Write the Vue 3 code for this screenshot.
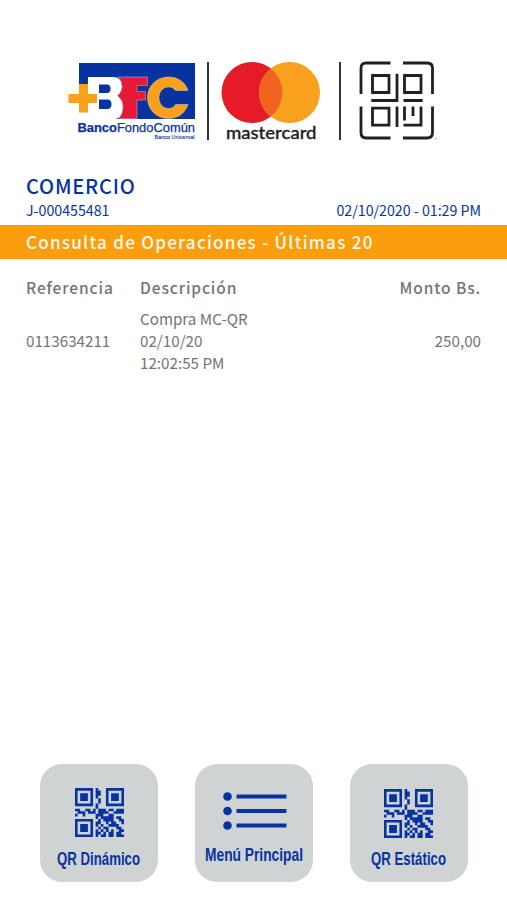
<template>
  <main class="screen">
    <!-- LOGOS -->
    <header class="logos">
      <svg class="logo-bfc" viewBox="0 0 128 80" width="128" height="80">
        <path d="M11 2h116v56H20V23h-9z" fill="#0733a1" />
        <path
          d="M20 16h25q9 0 9 9.500 0 6-4.500 9.500 5.500 4 5.500 11Q55 58 46 58H19.500zM31 23.500v8.500h8.500q3-.5 3-4.200t-3-4.300zM31 38.500v9.500h9q3.500-.5 3.500-4.700t-3.500-4.800z"
          fill="#fff"
          fill-rule="evenodd"
        />
        <path
          d="M50 16h29.500v8.500H69v6h8.500v8.500H69v18.500H51q4-5 4-12 0-7-5.500-11 4.500-3.500 4.500-9.500 0-6-4-9z"
          fill="#e61937"
          stroke="#f3a8bd"
          stroke-width=".5"
        />
        <path d="M11 23h9v10h9v9h-9v9.500h-9v-9.500H.5v-9H11z" fill="#f9a11b" />
        <path
          d="M120 29.500C117 20.500 109.500 16 100.500 16 88.500 16 79.500 25 79.500 36.800s9 20.700 21 20.700c9 0 16.500-4.800 19.500-14H107.500c-1.500 2.500-3.500 4-7 4-5.500 0-9.500-4.500-9.500-10.700s4-10.800 9.500-10.800c3.500 0 5.500 1.200 7 3.500z"
          fill="#f9a11b"
          stroke="#e8cfa0"
          stroke-width=".5"
        />
        <text x="9.500" y="71" textLength="117.500" lengthAdjust="spacingAndGlyphs" class="bank">
          <tspan font-weight="700">Banco</tspan>FondoComún
        </text>
        <text x="86.500" y="78" textLength="40" lengthAdjust="spacingAndGlyphs" class="bank-sub">Banco Universal</text>
      </svg>
      <i class="divider"></i>
      <svg class="logo-mc" viewBox="0 0 102 80" width="102" height="80">
        <circle cx="32" cy="31.500" r="30.500" fill="#e51c27" />
        <circle cx="69.500" cy="31.500" r="30.500" fill="#f9a01f" />
        <path d="M50.750 7.500a30.500 30.500 0 0 1 0 48 30.500 30.500 0 0 1 0-48z" fill="#f26322" />
        <text x="6" y="77.500" textLength="90.500" lengthAdjust="spacingAndGlyphs" class="mc-name">mastercard</text>
        <circle cx="98" cy="77" r=".5" fill="#aaa" />
      </svg>
      <i class="divider"></i>
      <svg class="logo-scan" viewBox="0 0 80 80" width="80" height="80" fill="none" stroke="#231f20" stroke-width="2.800">
        <path d="M2 33V7q0-5 5-5H31.500M44 2h24q5.500 0 5.500 5v26M2 45.500v26q0 5.500 5 5.500H31.500M44 77h24q5.500 0 5.500-5.500v-26" />
        <path d="M13.500 14.500h16.500v17H13.500zM45.500 14.500h16.500v17H45.500zM13.500 47.200h16.500v17H13.500z" />
        <path d="M38 12.800v26.700H12.300M44.500 39.500h19.200M38 45.500v20.500M45.500 45.500v14M54 45.500v9.500M62 45.500v18.700H44.500" />
        <path d="M76 77.500h2" stroke="#aaa" stroke-width="1" />
      </svg>
    </header>

    <!-- MERCHANT -->
    <section class="merchant">
      <h1>COMERCIO</h1>
      <div class="merchant-row">
        <span>J-000455481</span>
        <span>02/10/2020 - 01:29 PM</span>
      </div>
    </section>

    <h2 class="banner">Consulta de Operaciones - Últimas 20</h2>

    <!-- OPERATIONS -->
    <section class="operations">
      <div class="row head">
        <span>Referencia</span>
        <span>Descripción</span>
        <span class="amount">Monto Bs.</span>
      </div>
      <div class="row" v-for="op in operations" :key="op.reference">
        <span>{{ op.reference }}</span>
        <div>
          <div v-for="line in op.description" :key="line">{{ line }}</div>
        </div>
        <span class="amount">{{ op.amount }}</span>
      </div>
    </section>

    <!-- ACTIONS -->
    <nav class="actions">
      <button v-for="action in actions" :key="action.label" class="action" :class="action.icon">
        <svg v-if="action.icon === 'qr'" class="qr-icon" viewBox="0 0 19 19" width="49" height="49">
          <path :d="qrPath" fill="#0733a1" />
        </svg>
        <svg v-else class="menu-icon" viewBox="0 0 64 38" width="64" height="38" fill="#0733a1">
          <template v-for="y in [4.500, 19, 33.500]" :key="y">
            <circle cx="4.500" :cy="y" r="4.300" />
            <rect x="13.500" :y="y - 2" width="50" height="4" rx=".5" />
          </template>
        </svg>
        <svg class="label" height="24" :width="action.width" :viewBox="`0 0 ${action.width} 24`">
          <text x="0" y="18.500" :textLength="action.width" lengthAdjust="spacingAndGlyphs">{{ action.label }}</text>
        </svg>
      </button>
    </nav>
  </main>
</template>

<script setup>
const operations = [
  {
    reference: "0113634211",
    description: ["Compra MC-QR", "02/10/20", "12:02:55 PM"],
    amount: "250,00"
  }
]

const actions = [
  { label: "QR Dinámico", icon: "qr", width: 83 },
  { label: "Menú Principal", icon: "menu", width: 98 },
  { label: "QR Estático", icon: "qr", width: 75 }
]

const modules = [
  "#######.#...#######",
  "#.....#.##..#.....#",
  "#.###.#.##..#.###.#",
  "#.###.#.#...#.###.#",
  "#.###.#..#..#.###.#",
  "#.....#..#..#.....#",
  "#######.#...#######",
  "........#..........",
  "##..##.#.###.##.###",
  ".###.###.####..####",
  "#..#....###..##....",
  "........#.#####.##.",
  "#######..#.####..##",
  "#.....#.##..#.##..#",
  "#.###.#.#.#..####..",
  "#.###.#..#.##...##.",
  "#.###.#.#.#.#.#..##",
  "#.....#.##.#.##.##.",
  "#######.#.##.##.###"
]

const qrPath = modules
  .flatMap((row, y) => [...row.matchAll(/#+/g)].map((m) => `M${m.index} ${y}h${m[0].length}v1.03h-${m[0].length}z`))
  .join("")
</script>

<style>
body {
  background: #fff;
}
</style>

<style scoped>
.screen {
  box-sizing: border-box;
  height: 900px;
  padding-top: 61px;
  display: flex;
  flex-direction: column;
  font-family: "Noto Sans CJK SC", "Noto Sans", sans-serif;
  color: #747474;
  background: #fff;
}

.logos {
  display: flex;
  height: 80px;
  padding-left: 68px;
}

.logos svg {
  flex: none;
}

.divider {
  flex: none;
  width: 2px;
  height: 78px;
  margin-top: 1px;
  background: #333;
}

.logo-bfc {
  margin-right: 11px;
}

.logo-mc {
  margin: 0 17px 0 11px;
}

.logo-scan {
  margin-left: 18px;
}

.bank {
  font: 12.500px "Liberation Sans", Arial, sans-serif;
  fill: #0733a1;
  stroke: #0733a1;
  stroke-width: 0.25;
}

.bank-sub {
  font: 5px "Liberation Sans", Arial, sans-serif;
  fill: #0733a1;
  stroke: #0733a1;
  stroke-width: 0.1;
}

.mc-name {
  font: 500 17px Lato, sans-serif;
  fill: #231f20;
  stroke: #231f20;
  stroke-width: 0.35;
}

.merchant {
  height: 84px;
  box-sizing: border-box;
  padding: 33px 26px 0;
  color: #0733a1;
}

h1 {
  margin: 0;
  font-size: 20px;
  line-height: 24px;
  font-weight: 500;
  letter-spacing: 0.8px;
}

.merchant-row {
  display: flex;
  justify-content: space-between;
  font-size: 14.200px;
  line-height: 24px;
}

.banner {
  margin: 0;
  height: 34px;
  padding-left: 26px;
  font-size: 17px;
  line-height: 34px;
  font-weight: 500;
  letter-spacing: 1.27px;
  color: #fffaf0;
  background: #fb9e0e;
}

.operations {
  flex: 1;
  padding: 16px 26px 0;
}

.row {
  display: grid;
  grid-template-columns: 114px 1fr auto;
  align-items: center;
  font-size: 15.200px;
  line-height: 22px;
}

.head {
  height: 24px;
  margin-bottom: 8px;
  font-size: 15.500px;
  font-weight: 500;
  letter-spacing: 0.900px;
}

.amount {
  text-align: right;
}

.actions {
  display: flex;
  gap: 37px;
  padding: 0 39.500px 18px;
}

.action {
  box-sizing: border-box;
  width: 118px;
  height: 118px;
  padding: 0;
  border: 0;
  border-radius: 22px;
  display: flex;
  flex-direction: column;
  align-items: center;
  background: #d0d3d4;
}

.qr-icon {
  margin: 24px 0 0 2px;
}

.action:last-child .qr-icon {
  margin: 25px 0 -1px;
}

.menu-icon {
  margin: 28px 0 0 2px;
}

.label {
  margin-top: 9px;
  overflow: visible;
}

.menu .label {
  margin-top: 12px;
}

.label text {
  font: 700 18.500px "Liberation Sans Narrow", "Liberation Sans", Arial, sans-serif;
  fill: #0733a1;
}
</style>
